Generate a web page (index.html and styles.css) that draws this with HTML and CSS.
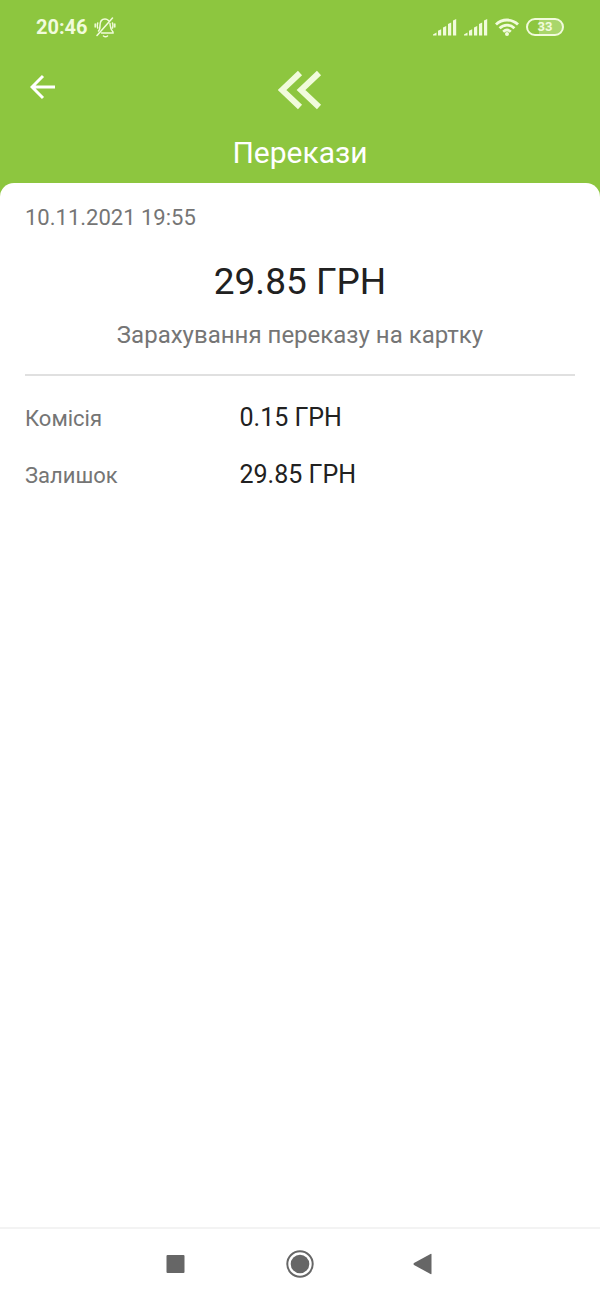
FILE: index.html
```html
<!DOCTYPE html>
<html lang="uk">
<head>
<meta charset="utf-8">
<meta name="viewport" content="width=device-width, initial-scale=1">
<title>Перекази</title>
<link rel="stylesheet" href="styles.css">
</head>
<body>
<div class="screen">
  <div class="status">
    <span class="clock">20:46</span>
    <svg class="bell" width="22" height="22" viewBox="0 0 22 22" aria-hidden="true">
      <path d="M3 19.500 18.500 2M4.500 15c1.500-1.300 1.500-3 1.500-5.500C6 5.500 8 3 11 3c1.500 0 2.500.5 3.500 1.500M16 7.500c.5 4.500.2 6 3 8.500v1H7.500M9.500 20c1.200 1 2.800 1 4 0M3.700 7c-.6 1.800-.6 3.200 0 5M1.200 8v3M18.500 7c.6 1.800.6 3.200 0 5M20.800 8v3"/>
    </svg>
    <div class="indicators">
      <svg width="24" height="18" viewBox="0 0 24 18" aria-hidden="true"><path fill="currentColor" d="M0 17.500v-1l3.500-2v3zM5 12.800l3.200-1.500v6.200H5zM10 9.500l3.200-1.500v9.500H10zM15 6l3.200-1.500v13H15zM20 2.500 23.200 1v16.500H20z"/></svg>
      <svg width="24" height="18" viewBox="0 0 24 18" aria-hidden="true"><path fill="currentColor" d="M0 17.500v-1l3.500-2v3zM5 12.800l3.200-1.500v6.200H5zM10 9.500l3.200-1.500v9.500H10zM15 6l3.200-1.500v13H15zM20 2.500 23.200 1v16.500H20z"/></svg>
      <svg class="wifi" width="24" height="18" viewBox="0 0 24 18" aria-hidden="true"><path d="M1 6.500c6-6 16-6 22 0M4.600 10.300c4.200-4.200 10.600-4.200 14.800 0M8.200 13.700c2.300-2 5.300-2 7.600 0"/><circle cx="12" cy="16" r="2"/></svg>
      <span class="battery">33</span>
    </div>
  </div>
  <header class="header">
    <div class="toolbar">
      <button class="back" type="button" aria-label="Назад">
        <svg width="26" height="26" viewBox="0 0 26 26" aria-hidden="true"><path d="M25 13H3M13 2 2 13l11 11"/></svg>
      </button>
      <svg class="logo" width="44" height="40" viewBox="0 0 44 40" aria-hidden="true"><path d="M22 3 4 20l18 17M41 3 23 20l18 17"/></svg>
    </div>
    <h1 class="title">Перекази</h1>
  </header>
  <main class="card">
    <time class="date" datetime="2021-11-10T19:55">10.11.2021 19:55</time>
    <p class="amount">29.85 ГРН</p>
    <p class="description">Зарахування переказу на картку</p>
    <dl class="details">
      <dt>Комісія</dt><dd>0.15 ГРН</dd>
      <dt>Залишок</dt><dd>29.85 ГРН</dd>
    </dl>
  </main>
  <nav class="navbar">
    <button type="button" aria-label="Останні"><svg width="28" height="28" viewBox="0 0 28 28"><rect x="4.500" y="5" width="18" height="18" rx="1"/></svg></button>
    <button type="button" aria-label="Додому"><svg width="28" height="28" viewBox="0 0 28 28"><circle cx="14" cy="14" r="9.300"/><circle class="ring" cx="14" cy="14" r="12.700"/></svg></button>
    <button type="button" aria-label="Назад"><svg width="28" height="28" viewBox="0 0 28 28"><path d="M21.500 4.500v19q0 1-1 .5L4 15q-1-1 0-2L20.500 4q1-.5 1 .5z"/></svg></button>
  </nav>
</div>
</body>
</html>
```
FILE: styles.css
```css
* {
  box-sizing: border-box;
}

body {
  margin: 0;
  font-family: Roboto, "Liberation Sans", sans-serif;
  color: #212121;
  background: #8dc63f;
}

button {
  display: grid;
  place-items: center;
  padding: 0;
  border: 0;
  background: none;
  color: inherit;
}

svg {
  display: block;
}

.screen {
  display: flex;
  flex-direction: column;
  min-height: 100vh;
}

.status {
  display: flex;
  align-items: center;
  gap: 6px;
  height: 54px;
  padding: 0 36px;
  color: #f1fbdc;
}

.clock {
  font-size: 20px;
  font-weight: 700;
  line-height: 24px;
}

.bell {
  fill: none;
  stroke: currentColor;
  stroke-width: 1.5;
  stroke-linecap: round;
}

.indicators {
  display: flex;
  align-items: center;
  gap: 7px;
  margin-left: auto;
}

.wifi {
  fill: none;
  stroke: currentColor;
  stroke-width: 2.8;
}

.wifi circle {
  fill: currentColor;
  stroke: none;
}

.battery {
  width: 38px;
  height: 18px;
  border: 2px solid currentColor;
  border-radius: 9px;
  background: linear-gradient(90deg, #8dc63f 33%, #a9d66b 33%);
  font-size: 13px;
  font-weight: 700;
  line-height: 14px;
  text-align: center;
}

.header {
  padding-bottom: 12px;
  color: #ffffff;
}

.toolbar {
  display: grid;
  grid-template-columns: 1fr auto 1fr;
  align-items: center;
  height: 72px;
  padding: 0 24px;
}

.back {
  width: 38px;
  height: 38px;
  margin-bottom: 6px;
}

.back svg {
  fill: none;
  stroke: currentColor;
  stroke-width: 3;
}

.logo {
  fill: none;
  stroke: #f1fbdc;
  stroke-width: 6;
}

.title {
  margin: 0;
  padding-top: 8px;
  font-size: 30px;
  font-weight: 400;
  line-height: 37px;
  text-align: center;
}

.card {
  flex: 1;
  padding: 21px 25px;
  border-radius: 14px 14px 0 0;
  background: #ffffff;
}

.date {
  display: block;
  color: #757575;
  font-size: 22px;
  line-height: 28px;
}

.amount {
  margin: 28px 0 0;
  font-size: 37px;
  line-height: 44px;
  text-align: center;
}

.description {
  margin: 16px 0 0;
  color: #757575;
  font-size: 24px;
  line-height: 30px;
  text-align: center;
}

.details {
  display: grid;
  grid-template-columns: 39% 1fr;
  align-items: baseline;
  row-gap: 28px;
  margin: 24px 0 0;
  padding-top: 28px;
  border-top: 2px solid #e0e0e0;
}

.details dt {
  color: #757575;
  font-size: 22px;
  line-height: 28px;
}

.details dd {
  margin: 0;
  font-size: 25px;
  line-height: 28px;
}

.navbar {
  display: grid;
  grid-template-columns: repeat(3, 1fr);
  height: 72px;
  padding: 0 19%;
  border-top: 2px solid #f3f3f3;
  background: #ffffff;
  color: #666666;
}

.navbar svg {
  fill: currentColor;
}

.navbar .ring {
  fill: none;
  stroke: currentColor;
  stroke-width: 2;
}
```
